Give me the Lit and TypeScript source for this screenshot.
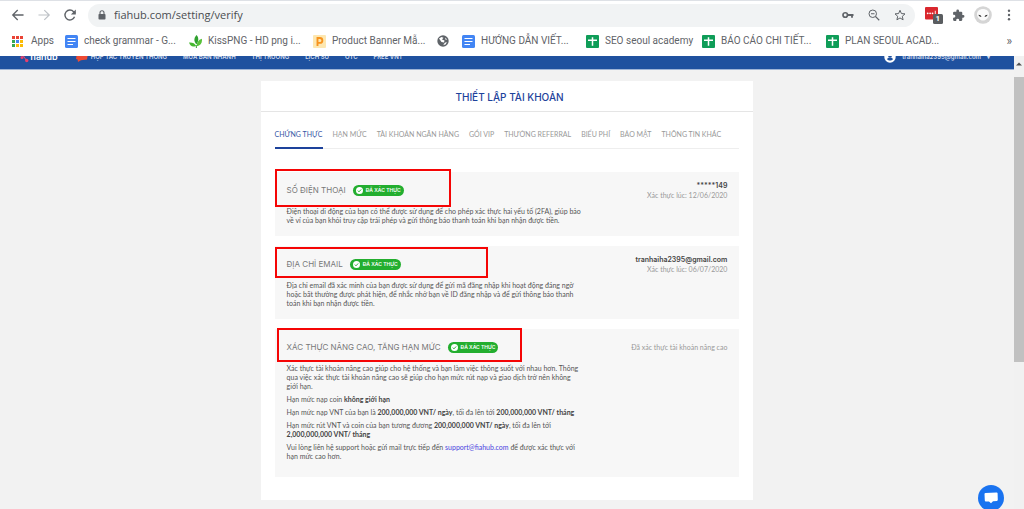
import { LitElement, html, css, svg, nothing } from "lit";
import { customElement, property } from "lit/decorators.js";
import { classMap } from "lit/directives/class-map.js";

const icons: Record<string, unknown> = {
  back: svg`<svg viewBox="0 0 24 24" width="14" height="14"><path d="M21.5 12H3.5M11.5 3.5 3 12l8.5 8.5" fill="none" stroke="#5f6368" stroke-width="2.2"/></svg>`,
  forward: svg`<svg viewBox="0 0 24 24" width="14" height="14"><path d="M2.5 12h18M12.500 3.500 21 12l-8.500 8.500" fill="none" stroke="#bdc1c6" stroke-width="2"/></svg>`,
  reload: svg`<svg viewBox="0 0 24 24" width="14" height="14"><path d="M19.800 15a8.500 8.500 0 1 1-1.600-8.700L21 9" fill="none" stroke="#5f6368" stroke-width="2.400"/><path d="M22 2.500V11h-8.500z" fill="#5f6368"/></svg>`,
  lock: svg`<svg viewBox="0 0 8 10" width="8" height="10"><rect x=".5" y="4" width="7" height="5.500" rx=".8" fill="#5f6368"/><path d="M2 4.300V2.700a2 2 0 0 1 4 0v1.600" fill="none" stroke="#5f6368" stroke-width="1.100"/></svg>`,
  key: svg`<svg viewBox="0 0 24 16" width="12" height="8"><circle cx="6.500" cy="8" r="4.500" fill="none" stroke="#5f6368" stroke-width="3.400"/><path d="M11 8h12M20 8v5.500" fill="none" stroke="#5f6368" stroke-width="3.600"/></svg>`,
  zoom: svg`<svg viewBox="0 0 24 24" width="12" height="12"><circle cx="9.500" cy="9.500" r="7.500" fill="none" stroke="#5f6368" stroke-width="2"/><path d="M6 9.500h7M15 15l7.500 7.500" fill="none" stroke="#5f6368" stroke-width="2.200"/></svg>`,
  star: svg`<svg viewBox="0 0 24 24" width="12" height="12"><path d="m12 2.500 2.800 6.600 7.200.7-5.400 4.800 1.600 7L12 17.900l-6.200 3.700 1.600-7L2 9.800l7.200-.7z" fill="none" stroke="#5f6368" stroke-width="2"/></svg>`,
  puzzle: svg`<svg viewBox="0 0 24 24" width="13" height="13"><path d="M20.500 11H19V7a2 2 0 0 0-2-2h-4V3.500a2.500 2.500 0 0 0-5 0V5H4a2 2 0 0 0-2 2v3.800h1.500a2.700 2.700 0 0 1 0 5.400H2V20c0 1.100.9 2 2 2h3.800v-1.500a2.700 2.700 0 0 1 5.400 0V22H17a2 2 0 0 0 2-2v-4h1.500a2.500 2.500 0 0 0 0-5z" fill="#5f6368"/></svg>`,
  extension: svg`<svg viewBox="0 0 18 18" width="18" height="18"><rect x="0" y="1" width="13" height="12.500" rx="1" fill="#d9272e"/><g fill="#fff"><circle cx="2.700" cy="7.300" r=".9"/><circle cx="5.100" cy="7.300" r=".9"/><circle cx="7.500" cy="7.300" r=".9"/><path d="M9.800 4.800h.9v4.400h-.9z"/></g><rect x="8" y="8" width="10" height="10" rx="1.500" fill="#5a5d60"/></svg>`,
  profile: svg`<svg viewBox="0 0 18 18" width="18" height="18"><circle cx="9" cy="9" r="8.800" fill="#d5d5d5"/><path d="M9 3c3.600 0 6 2.100 6 5.200 0 3-2.700 6.300-6 6.300s-6-3.300-6-6.300C3 5.100 5.400 3 9 3z" fill="#fafafa"/><path d="M4.500 8.700c1.700.1 2.600.8 3 2.100-1.600.1-2.700-.7-3-2.100zM13.500 8.700c-1.700.1-2.600.8-3 2.100 1.600.1 2.700-.7 3-2.100z" fill="#333"/></svg>`,
  dots: svg`<svg viewBox="0 0 4 12" width="4" height="12" fill="#5f6368"><circle cx="2" cy="1.700" r="1.200"/><circle cx="2" cy="6" r="1.200"/><circle cx="2" cy="10.300" r="1.200"/></svg>`,
  apps: svg`<svg viewBox="0 0 11 11" width="11" height="11"><g fill="#ea4335"><path d="M0 0h3v3H0zM4 0h3v3H4zM8 0h3v3H8z"/></g><path d="M0 4h3v3H0z" fill="#34a853"/><path d="M4 4h3v3H4z" fill="#4285f4"/><path d="M8 4h3v3H8zM4 8h3v3H4zM8 8h3v3H8z" fill="#fbbc05"/><path d="M0 8h3v3H0z" fill="#34a853"/></svg>`,
  doc: svg`<svg viewBox="0 0 13 13" width="13" height="13"><rect width="13" height="13" rx="1.500" fill="#4285f4"/><path d="M2.500 3.500h8M2.500 6.500h8M2.500 9.500h5.500" stroke="#fff" stroke-width="1.200"/></svg>`,
  leaf: svg`<svg viewBox="0 0 13 13" width="13" height="13"><path d="M7.500 0C10 2.500 9.800 6.500 7.400 9.300 4.600 6.500 4.800 3 7.500 0z" fill="#2fa12f"/><path d="M0 7.500c3.500-.3 6 1 7 3.200C4 12.500 1.300 11.500 0 7.500z" fill="#45b82f"/><path d="M12.800 3.800c.8 3.600-1 6.600-5 7.400-.3-3.300 1.400-6.200 5-7.400z" fill="#58c13a"/><path d="m7.200 10 .2 3" stroke="#2fa12f"/></svg>`,
  pngTree: svg`<svg viewBox="0 0 13 13" width="13" height="13"><rect width="13" height="13" rx="1" fill="#fde7b0"/><path d="M4.500 11V3h2.400a2.300 2.300 0 0 1 0 4.900H4.500" fill="none" stroke="#f7931e" stroke-width="1.900"/></svg>`,
  globe: svg`<svg viewBox="0 0 12 12" width="12" height="12"><circle cx="6" cy="6" r="5.700" fill="#5f6368"/><path d="M2 3.500 4.500 2l2 .8L5 4.500l2.500 1L7 7.500 4.500 7zM7.800 7.800l2-.8-1 2.200-2.600 1zM8 2.500l2.200 2-1.600.3z" fill="#fff"/></svg>`,
  sheet: svg`<svg viewBox="0 0 13 13" width="13" height="13"><rect width="13" height="13" rx="1" fill="#0f9d58"/><path d="M6.500 2.300v8.400M2 5.200h9" stroke="#fff" stroke-width="1.500"/></svg>`,
  check: svg`<svg viewBox="0 0 8 8" width="7" height="7"><circle cx="4" cy="4" r="4" fill="#fff"/><path d="m2.100 4.100 1.300 1.400 2.500-2.700" fill="none" stroke="#23ae2f" stroke-width="1.100"/></svg>`,
  user: svg`<svg viewBox="0 0 12 12" width="12" height="12"><circle cx="6" cy="6" r="5.700" fill="#fff"/><circle cx="6" cy="4.500" r="2" fill="#1f519f"/><path d="M3 8.200c.7-2.200 5.300-2.200 6 0-1.500 1.700-4.500 1.700-6 0z" fill="#1f519f"/></svg>`,
  logo: svg`<svg viewBox="0 0 9 12" width="9" height="12"><path d="m2 3 4.500 6.500" stroke="#ef476f" stroke-width="1"/><circle cx="2" cy="6.500" r="1.500" fill="#e83e6c"/><circle cx="6.700" cy="9.500" r="1.700" fill="#e83e6c"/><circle cx="2" cy="2.500" r="1.500" fill="#fff"/></svg>`,
  hot: svg`<svg viewBox="0 0 12 10" width="12" height="10"><path d="M1 1h11l-1 6.500-6 .8L2 10l-.4-2.500L0 7z" fill="#ee4a32"/></svg>`,
  chat: svg`<svg viewBox="0 0 14 12" width="14" height="12"><path d="M1.500 1 12.500.4q1-.1 1.100.8l.2 6.600q0 1-.9 1.100L9 9.200 7 11.300 5 9.400l-3.200.1q-.9 0-1-.9L.5 2q0-.9 1-1z" fill="#fff"/></svg>`,
};

const bookmarks = [
  { icon: "apps", label: "Apps", size: "apps" },
  { icon: "doc", label: "check grammar - G...", size: "long" },
  { icon: "leaf", label: "KissPNG - HD png i...", size: "long" },
  { icon: "pngTree", label: "Product Banner Mẫ...", size: "long" },
  { icon: "globe", label: "", size: "bare" },
  { icon: "doc", label: "HƯỚNG DẪN VIẾT...", size: "long" },
  { icon: "sheet", label: "SEO seoul academy", size: "medium" },
  { icon: "sheet", label: "BÁO CÁO CHI TIẾT...", size: "long" },
  { icon: "sheet", label: "PLAN SEOUL ACAD...", size: "long" },
];

@customElement("browser-bar")
class BrowserBar extends LitElement {
  static styles = css`
    :host { display: block; background: #fff; border-top: 1px solid #dee1e6; color: #5f6368; font-family: Roboto, "Open Sans", sans-serif; }
    svg { display: block; flex: none; }
    button { appearance: none; border: 0; padding: 0; margin: 0; background: none; font: inherit; color: inherit; display: block; }
    .toolbar { display: flex; align-items: center; height: 28px; padding: 0 13px 0 11px; box-sizing: border-box; }
    .history { display: flex; gap: 12px; margin-right: 11px; }
    .address { flex: 1; display: flex; align-items: center; gap: 8px; height: 23px; padding: 0 9px 0 10px; background: #f1f3f4; border-radius: 12px; }
    .url { flex: 1; min-width: 0; border: 0; padding: 0; outline: 0; background: none; color: #4a4d51; font: 11px/16px "Open Sans", sans-serif; }
    .tools { display: flex; align-items: center; gap: 14px; }
    .extras { display: flex; align-items: center; gap: 9px; margin-left: 10px; }
    .ext { position: relative; }
    .count { position: absolute; right: 3px; bottom: 0; color: #fff; font-size: 8px; line-height: 10px; font-weight: 700; }
    .menu { margin-left: 6px; }
    .bookmarks { display: flex; align-items: center; gap: 16px; height: 27px; padding: 0 12px 3px; box-sizing: border-box; overflow: hidden; }
    .bookmark { display: flex; align-items: center; gap: 6px; flex: none; color: inherit; text-decoration: none; font-size: 10px; line-height: 14px; white-space: nowrap; }
    .apps { width: 37px; gap: 8px; }
    .long { width: 108px; }
    .medium { width: 100px; }
    .bare { width: 9px; }
    .more { margin-left: auto; font-size: 12px; line-height: 14px; }
  `;

  render() {
    return html`
      <div class="toolbar">
        <div class="history">
          <button aria-label="Back">${icons.back}</button>
          <button aria-label="Forward">${icons.forward}</button>
          <button aria-label="Reload">${icons.reload}</button>
        </div>
        <div class="address">
          ${icons.lock}
          <input class="url" type="text" aria-label="Address" .value=${"fiahub.com/setting/verify"} />
          <div class="tools">
            <button aria-label="Passwords">${icons.key}</button>
            <button aria-label="Zoom">${icons.zoom}</button>
            <button aria-label="Bookmark">${icons.star}</button>
          </div>
        </div>
        <div class="extras">
          <button class="ext" aria-label="Extension">${icons.extension}<span class="count">1</span></button>
          <button aria-label="Extensions">${icons.puzzle}</button>
          <button aria-label="Profile">${icons.profile}</button>
          <button class="menu" aria-label="Menu">${icons.dots}</button>
        </div>
      </div>
      <div class="bookmarks">
        ${bookmarks.map((b) => html`<a href="#" class="bookmark ${b.size}" aria-label=${b.label || "Bookmark"}>${icons[b.icon]}${b.label ? html`<span>${b.label}</span>` : nothing}</a>`)}
        <button class="more" aria-label="More bookmarks">»</button>
      </div>
    `;
  }
}

@customElement("verify-section")
class VerifySection extends LitElement {
  @property() heading = "";
  @property() value = "";
  @property() note = "";

  static styles = css`
    :host { display: block; background: #f7f7f7; padding: 12px 12px 11px; }
    .row { display: flex; align-items: center; justify-content: space-between; height: 13px; }
    .title { display: flex; align-items: center; gap: 7px; }
    h2 { margin: 0; color: #777; font-size: 8px; line-height: 13px; font-weight: 400; white-space: nowrap; }
    .badge { display: flex; align-items: center; gap: 3px; height: 11px; padding: 0 3px; border-radius: 6px; background: #23ae2f; color: #fff; font-size: 5px; line-height: 11px; font-weight: 600; white-space: nowrap; }
    .badge svg { display: block; }
    .status { text-align: right; color: #999; font-family: Lato, Inter, sans-serif; font-size: 7px; line-height: 9px; white-space: nowrap; }
    .value { color: #444; font-family: Inter, sans-serif; font-weight: 600; line-height: 10px; }
    .body { margin-top: 10px; color: #555; font-family: Lato, Inter, sans-serif; font-size: 7px; line-height: 9px; }
  `;

  render() {
    return html`
      <div class="row">
        <div class="title">
          <h2>${this.heading}</h2>
          <span class="badge">${icons.check}ĐÃ XÁC THỰC</span>
        </div>
        <div class="status">
          ${this.value ? html`<div class="value">${this.value}</div>` : nothing}
          <div>${this.note}</div>
        </div>
      </div>
      <div class="body"><slot></slot></div>
    `;
  }
}

const menu = ["HỢP TÁC TRUYỀN THÔNG", "MUA BÁN NHANH", "THỊ TRƯỜNG", "LỊCH SỬ", "OTC", "FREE VNT"];
const tabs = ["CHỨNG THỰC", "HẠN MỨC", "TÀI KHOẢN NGÂN HÀNG", "GÓI VIP", "THƯỞNG REFERRAL", "BIỂU PHÍ", "BẢO MẬT", "THÔNG TIN KHÁC"];

@customElement("app-root")
class AppRoot extends LitElement {
  static styles = css`
    :host { display: flex; flex-direction: column; height: 100vh; overflow: hidden; position: relative; background: #f2f2f2; font-family: Inter, "Open Sans", sans-serif; }
    a { color: inherit; text-decoration: none; }
    p { margin: 0; }
    svg { display: block; }
    .view { flex: 1; min-height: 0; display: flex; }
    .page { flex: 1; min-width: 0; overflow: hidden; }
    .site { display: flex; align-items: flex-end; height: 14px; overflow: hidden; background: #1f519f; border-bottom: 1px solid #9fb4d6; box-sizing: border-box; color: #d5deee; }
    .site-row { flex: 1; display: flex; align-items: center; justify-content: space-between; height: 24px; padding: 0 24px 0 20px; font-size: 6px; line-height: 8px; font-weight: 600; }
    .links, .brand, .account { display: flex; align-items: center; }
    .brand { gap: 1px; margin-right: 2px; font-size: 9px; line-height: 12px; color: #fff; }
    .links { gap: 16px; }
    .link { display: flex; align-items: center; gap: 3px; white-space: nowrap; }
    .account { gap: 6px; }
    .card { width: 48.6%; min-width: 492px; margin: 11px auto 0; padding-bottom: 23px; background: #fff; box-sizing: border-box; }
    h1 { margin: 0; padding: 10px 0 7px 5px; border-bottom: 1px solid #e5e5e5; color: #1d429b; text-align: center; font-size: 10px; line-height: 13px; font-weight: 500; }
    .content { padding: 17px 14px 0; }
    .tabs { display: flex; gap: 10px; border-bottom: 1px solid #eee; }
    .tab { padding: 1px 0 8px; margin-bottom: -1px; border-bottom: 2px solid transparent; color: #999; font-family: Lato, Inter, sans-serif; font-size: 7px; line-height: 9px; white-space: nowrap; }
    .tab.active { color: #3657a5; border-color: #1d429b; }
    .sections { display: flex; flex-direction: column; gap: 10px; margin-top: 23px; }
    .section { position: relative; }
    .mark { position: absolute; border: 2px solid #f50505; box-sizing: border-box; pointer-events: none; }
    .phone { left: 0; top: -3px; width: 176px; height: 38px; }
    .email { left: 0; top: 1px; width: 213px; height: 31px; }
    .advanced { left: 2px; top: -1px; width: 245px; height: 34px; }
    .limits { display: flex; flex-direction: column; gap: 4px; padding-bottom: 5px; }
    b { color: #444; font-weight: 700; }
    .mail { color: #4a3fe0; }
    .scrollbar { width: 10px; flex: none; display: flex; flex-direction: column; background: #f1f1f1; }
    .arrow { height: 21px; display: flex; align-items: center; justify-content: center; padding-bottom: 6px; box-sizing: border-box; }
    .thumb { height: 63%; background: #c1c1c1; }
    .chat { position: absolute; right: 20px; bottom: -2px; width: 26px; height: 26px; border: 0; padding: 0; border-radius: 50%; background: #1a73f0; display: flex; align-items: center; justify-content: center; }
  `;

  render() {
    return html`
      <browser-bar></browser-bar>
      <div class="view">
        <div class="page">
          <header class="site">
            <div class="site-row">
              <nav class="links">
                <a href="#" class="brand">${icons.logo}fiahub</a>
                ${menu.map((m, i) => html`<a href="#" class="link">${i === 0 ? icons.hot : nothing}${m}</a>`)}
              </nav>
              <a href="#" class="account">${icons.user}<span>tranhaiha2395@gmail.com</span><span>▾</span></a>
            </div>
          </header>
          <main class="card">
            <h1>THIẾT LẬP TÀI KHOẢN</h1>
            <div class="content">
              <nav class="tabs">
                ${tabs.map((t, i) => html`<a href="#" class=${classMap({ tab: true, active: i === 0 })}>${t}</a>`)}
              </nav>
              <div class="sections">
                <div class="section">
                  <verify-section heading="SỐ ĐIỆN THOẠI" value="*****149" note="Xác thực lúc: 12/06/2020">
                    <p>Điện thoại di động của bạn có thể được sử dụng để cho phép xác thực hai yếu tố (2FA), giúp bảo<br />về ví của bạn khỏi truy cập trái phép và gửi thông báo thanh toán khi bạn nhận được tiền.</p>
                  </verify-section>
                  <div class="mark phone"></div>
                </div>
                <div class="section">
                  <verify-section heading="ĐỊA CHỈ EMAIL" value="tranhaiha2395@gmail.com" note="Xác thực lúc: 06/07/2020">
                    <p>Địa chỉ email đã xác minh của bạn được sử dụng để gửi mã đăng nhập khi hoạt động đáng ngờ<br />hoặc bất thường được phát hiện, để nhắc nhở bạn về ID đăng nhập và để gửi thông báo thanh<br />toán khi bạn nhận được tiền.</p>
                  </verify-section>
                  <div class="mark email"></div>
                </div>
                <div class="section">
                  <verify-section heading="XÁC THỰC NÂNG CAO, TĂNG HẠN MỨC" note="Đã xác thực tài khoản nâng cao">
                    <div class="limits">
                      <p>Xác thực tài khoản nâng cao giúp cho hệ thống và bạn làm việc thông suốt với nhau hơn. Thông<br />qua việc xác thực tài khoản nâng cao sẽ giúp cho hạn mức rút nạp và giao dịch trở nên không<br />giới hạn.</p>
                      <p>Hạn mức nạp coin <b>không giới hạn</b></p>
                      <p>Hạn mức nạp VNT của bạn là <b>200,000,000 VNT/ ngày</b>, tối đa lên tới <b>200,000,000 VNT/ tháng</b></p>
                      <p>Hạn mức rút VNT và coin của bạn tương đương <b>200,000,000 VNT/ ngày</b>, tối đa lên tới<br /><b>2,000,000,000 VNT/ tháng</b></p>
                      <p>Vui lòng liên hệ support hoặc gửi mail trực tiếp đến <a class="mail" href="mailto:support@fiahub.com">support@fiahub.com</a> để được xác thực với<br />hạn mức cao hơn.</p>
                    </div>
                  </verify-section>
                  <div class="mark advanced"></div>
                </div>
              </div>
            </div>
          </main>
        </div>
        <div class="scrollbar">
          <div class="arrow"><svg viewBox="0 0 6 4" width="6" height="4"><path d="M0 3.500 3 .5l3 3z" fill="#505050"/></svg></div>
          <div class="thumb"></div>
        </div>
      </div>
      <button class="chat" aria-label="Chat">${icons.chat}</button>
    `;
  }
}
